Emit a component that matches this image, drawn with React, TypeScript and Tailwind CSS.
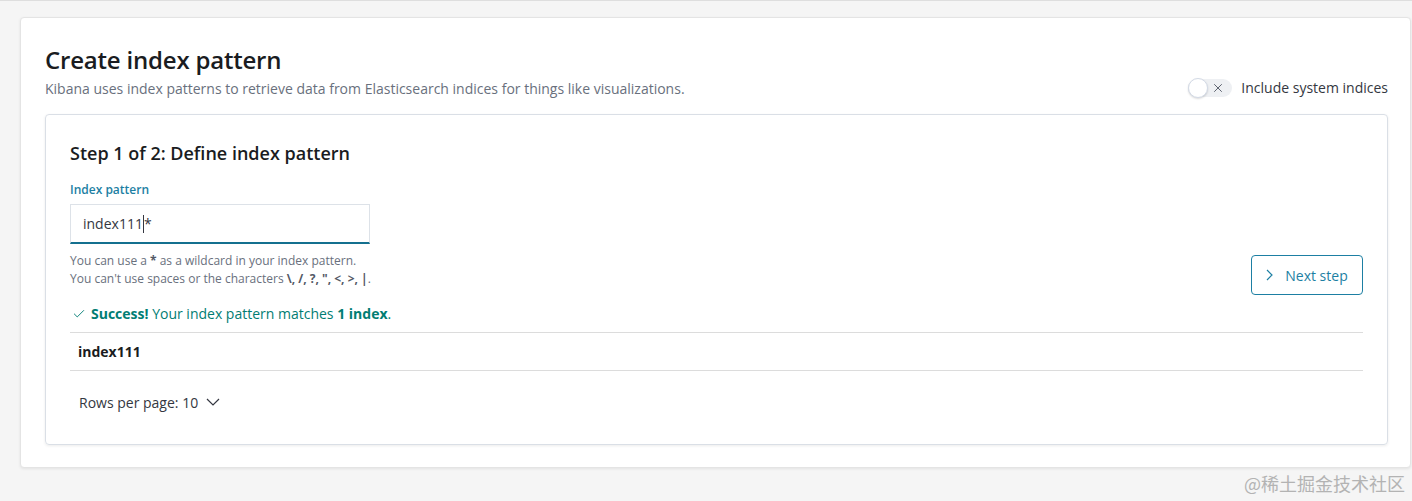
import { Check, X } from "lucide-react";

export default function App() {
  return (
    <div
      className="relative min-h-[501px] bg-[#f5f5f5] border-t border-[#dedede] pl-5 pt-4 pr-px overflow-hidden"
      style={{ fontFamily: '"Open Sans", "Noto Sans", sans-serif' }}
    >
      {/* Page panel */}
      <div className="bg-white rounded-[4px] border border-[#e4e4e4] shadow-[0_1px_3px_rgba(0,0,0,0.08)] pl-6 pr-[22px] pt-[26px] pb-6 h-[451px]">
        <div className="flex items-end justify-between">
          <div>
            <h1 className="text-[24px] leading-[32px] font-semibold text-[#1a1c21] tracking-[-0.2px]">
              Create index pattern
            </h1>
            <p className="text-[14px] leading-[20px] text-[#69707d] mt-[3px]">
              Kibana uses index patterns to retrieve data from Elasticsearch indices for things like visualizations.
            </p>
          </div>
          <label className="flex items-center gap-[9px] mb-px">
            <span className="relative w-[44px] h-[20px] flex items-center">
              <span className="absolute left-0 right-0 h-[18px] rounded-full bg-[#eef0f3]" />
              <span className="absolute left-0 w-[20px] h-[20px] rounded-full bg-white border border-[#d3dae6] shadow-[0_1px_2px_rgba(0,0,0,0.15)]" />
              <X className="absolute left-[23px] w-[14px] h-[14px] text-[#535966]" strokeWidth={1.6} />
            </span>
            <span className="text-[14px] leading-[20px] text-[#343741]">Include system indices</span>
          </label>
        </div>

        {/* Step panel */}
        <div className="mt-[15px] border border-[#dadfe6] rounded-[4px] shadow-[0_1px_3px_rgba(0,0,0,0.08)] px-6 pt-[26px] pb-[26px]">
          <h2 className="text-[18px] leading-[24px] font-semibold text-[#1a1c21]">
            Step 1 of 2: Define index pattern
          </h2>

          <div className="flex items-start justify-between mt-4 h-[107px]">
            <div>
              <div className="text-[12px] leading-[18px] font-semibold text-[#1d7fa3]">Index pattern</div>
              <div className="mt-[5px] w-[300px] h-[40px] bg-white border border-[#dde2e8] border-b-2 border-b-[#14708f] flex items-center px-3">
                <span className="text-[14px] text-[#343741]">index111</span>
                <span className="w-px h-[18px] bg-[#343741]" />
                <span className="text-[14px] text-[#343741]">*</span>
              </div>
              <div className="mt-2 text-[12px] leading-[18px] text-[#69707d]">
                <div>
                  You can use a <strong className="font-bold text-[#535966]">*</strong> as a wildcard in your index pattern.
                </div>
                <div>
                  You can't use spaces or the characters{" "}
                  <strong className="font-bold text-[#535966]">\, /, ?, ", &lt;, &gt;, |</strong>.
                </div>
              </div>
            </div>
            <button className="mt-[74px] w-[112px] h-[40px] shrink-0 rounded-[4px] border border-[#1d7fa3] text-[#1d7fa3] flex items-center justify-center gap-[12px] text-[14px]">
              <svg width="7" height="12" viewBox="0 0 7 12" fill="none" stroke="currentColor" strokeWidth="1.2">
                <polyline points="1,1 6,6 1,11" />
              </svg>
              <span>Next step</span>
            </button>
          </div>

          <div className="mt-4 flex items-center text-[14px] leading-[20px] text-[#017d73]">
            <Check className="w-[14px] h-[14px] mr-[5px] ml-[2px]" strokeWidth={1.6} />
            <strong className="font-bold">Success!</strong>
            <span>&nbsp;Your index pattern matches&nbsp;</span>
            <strong className="font-bold">1 index</strong>
            <span>.</span>
          </div>

          <div className="mt-[8px] border-t border-b border-[#dcdcdc] h-[39px] flex items-center px-2">
            <span className="text-[14px] font-bold text-[#1a1c21]">index111</span>
          </div>

          <div className="mt-[15px] h-8 flex items-center pl-[9px] text-[14px] text-[#343741]">
            <span>Rows per page: 10</span>
            <svg className="ml-[8px]" width="14" height="8" viewBox="0 0 14 8" fill="none" stroke="currentColor" strokeWidth="1.2">
              <polyline points="1,1 7,7 13,1" />
            </svg>
          </div>
        </div>
      </div>

      <div
        className="absolute right-[7px] bottom-[6px] text-[18px] leading-[24px] text-[#b3b3b3]"
        style={{ fontFamily: '"Noto Sans CJK SC", "Noto Sans", sans-serif' }}
      >
        @稀土掘金技术社区
      </div>
    </div>
  );
}
